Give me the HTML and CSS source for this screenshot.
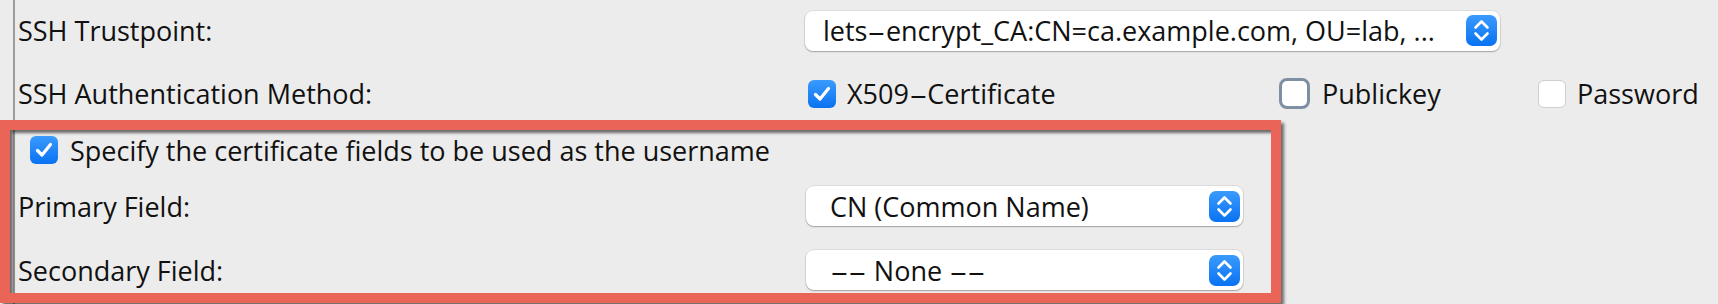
FILE: index.html
```html
<!DOCTYPE html>
<html>
<head>
<meta charset="utf-8">
<link rel="stylesheet" href="styles.css">
</head>
<body>
<div class="panel">
  <div class="label r1">SSH Trustpoint:</div>
  <div class="ctrl r1">
    <div class="select wide">
      <span class="val">lets<span class="dash">-</span>encrypt_CA:CN=ca.example.com, OU=lab, ...</span>
      <span class="stepper"><svg viewBox="0 0 31 31" width="31" height="31"><path d="M9.5 12.5 L15.5 6.5 L21.5 12.5" /><path d="M9.5 18.5 L15.5 24.5 L21.5 18.5" /></svg></span>
    </div>
  </div>

  <div class="label r2">SSH Authentication Method:</div>
  <div class="ctrl r2 checks">
    <label class="opt"><span class="cb on"><svg viewBox="0 0 28 28" width="28" height="28"><path d="M7.5 14.5 L12 19 L20.5 8.5" /></svg></span><span>X509<span class="dash">-</span>Certificate</span></label>
    <label class="opt"><span class="cb focus"></span><span>Publickey</span></label>
    <label class="opt"><span class="cb"></span><span>Password</span></label>
  </div>

  <div class="full r3">
    <label class="opt"><span class="cb on"><svg viewBox="0 0 28 28" width="28" height="28"><path d="M7.5 14.5 L12 19 L20.5 8.5" /></svg></span><span>Specify the certificate fields to be used as the username</span></label>
  </div>

  <div class="label r4">Primary Field:</div>
  <div class="ctrl r4">
    <div class="select narrow">
      <span class="val">CN (Common Name)</span>
      <span class="stepper"><svg viewBox="0 0 31 31" width="31" height="31"><path d="M9.5 12.5 L15.5 6.5 L21.5 12.5" /><path d="M9.5 18.5 L15.5 24.5 L21.5 18.5" /></svg></span>
    </div>
  </div>

  <div class="label r5">Secondary Field:</div>
  <div class="ctrl r5">
    <div class="select narrow">
      <span class="val"><span class="dash">-</span><span class="dash">-</span> None <span class="dash">-</span><span class="dash">-</span></span>
      <span class="stepper"><svg viewBox="0 0 31 31" width="31" height="31"><path d="M9.5 12.5 L15.5 6.5 L21.5 12.5" /><path d="M9.5 18.5 L15.5 24.5 L21.5 18.5" /></svg></span>
    </div>
  </div>
</div>
<div class="highlight"></div>
</body>
</html>
```

FILE: styles.css
```css
html, body {
  margin: 0;
  padding: 0;
  background: #ececec;
  width: 1718px;
  height: 304px;
  overflow: hidden;
}

body {
  font-family: "Open Sans", "Noto Sans", "DejaVu Sans", sans-serif;
  font-size: 27px;
  color: #111;
  position: relative;
}

.panel {
  margin-left: 13px;
  border-left: 2px solid #9c9c9c;
  height: 304px;
  box-sizing: border-box;
  display: grid;
  grid-template-columns: 790px 1fr;
  grid-template-rows: 60px 64px 52px 60px 68px;
}

.label {
  padding-left: 3px;
  display: flex;
  align-items: center;
  white-space: nowrap;
}

.ctrl {
  display: flex;
  align-items: center;
}

.full {
  grid-column: 1 / span 2;
  display: flex;
  align-items: center;
  padding-left: 15px;
}

.r1 { padding-top: 1px; }
.r2 { padding-top: 3px; }

.dash {
  display: inline-block;
  margin: 0 0.18em;
  transform: scaleX(2.1);
}

.select {
  height: 40px;
  box-sizing: border-box;
  background: #fff;
  border-radius: 8px;
  box-shadow: 0 0 0 1px rgba(0,0,0,0.06), 0 1px 1.5px rgba(0,0,0,0.28);
  display: flex;
  align-items: center;
  justify-content: space-between;
  padding-right: 3px;
  white-space: nowrap;
}

.select.wide {
  width: 695px;
  padding-left: 18px;
}

.select.narrow {
  width: 437px;
  margin-left: 1px;
  padding-left: 24px;
}

.stepper {
  width: 31px;
  height: 31px;
  border-radius: 7px;
  background: linear-gradient(#3a9bfd, #0a72f2);
  display: flex;
}

.stepper svg path {
  fill: none;
  stroke: #fff;
  stroke-width: 2.6;
  stroke-linecap: round;
  stroke-linejoin: round;
}

.checks {
  padding-left: 3px;
  display: grid;
  grid-template-columns: 471px 259px auto;
  align-items: center;
}

.opt {
  display: flex;
  align-items: center;
  white-space: nowrap;
}

.cb {
  width: 28px;
  height: 28px;
  box-sizing: border-box;
  border-radius: 6px;
  background: #fff;
  border: 1px solid #cfcfcf;
  margin-right: 11px;
  display: flex;
  flex: none;
}

.cb.on {
  background: linear-gradient(#3a9bfd, #0a72f2);
  border: none;
}

.cb.on svg path {
  fill: none;
  stroke: #fff;
  stroke-width: 3.2;
  stroke-linecap: round;
  stroke-linejoin: round;
}

.cb.focus {
  width: 31px;
  height: 31px;
  border: 3px solid #7f8fa3;
  border-radius: 8px;
  margin-right: 12px;
}

.r3 .cb {
  margin-right: 12px;
}

.highlight {
  position: absolute;
  left: 0;
  top: 120px;
  width: 1281px;
  height: 183px;
  box-sizing: border-box;
  border: 10px solid #ea6457;
  box-shadow: 3px 3px 3px rgba(0,0,0,0.55), inset 3px 3px 3px rgba(0,0,0,0.55);
  pointer-events: none;
}
```
